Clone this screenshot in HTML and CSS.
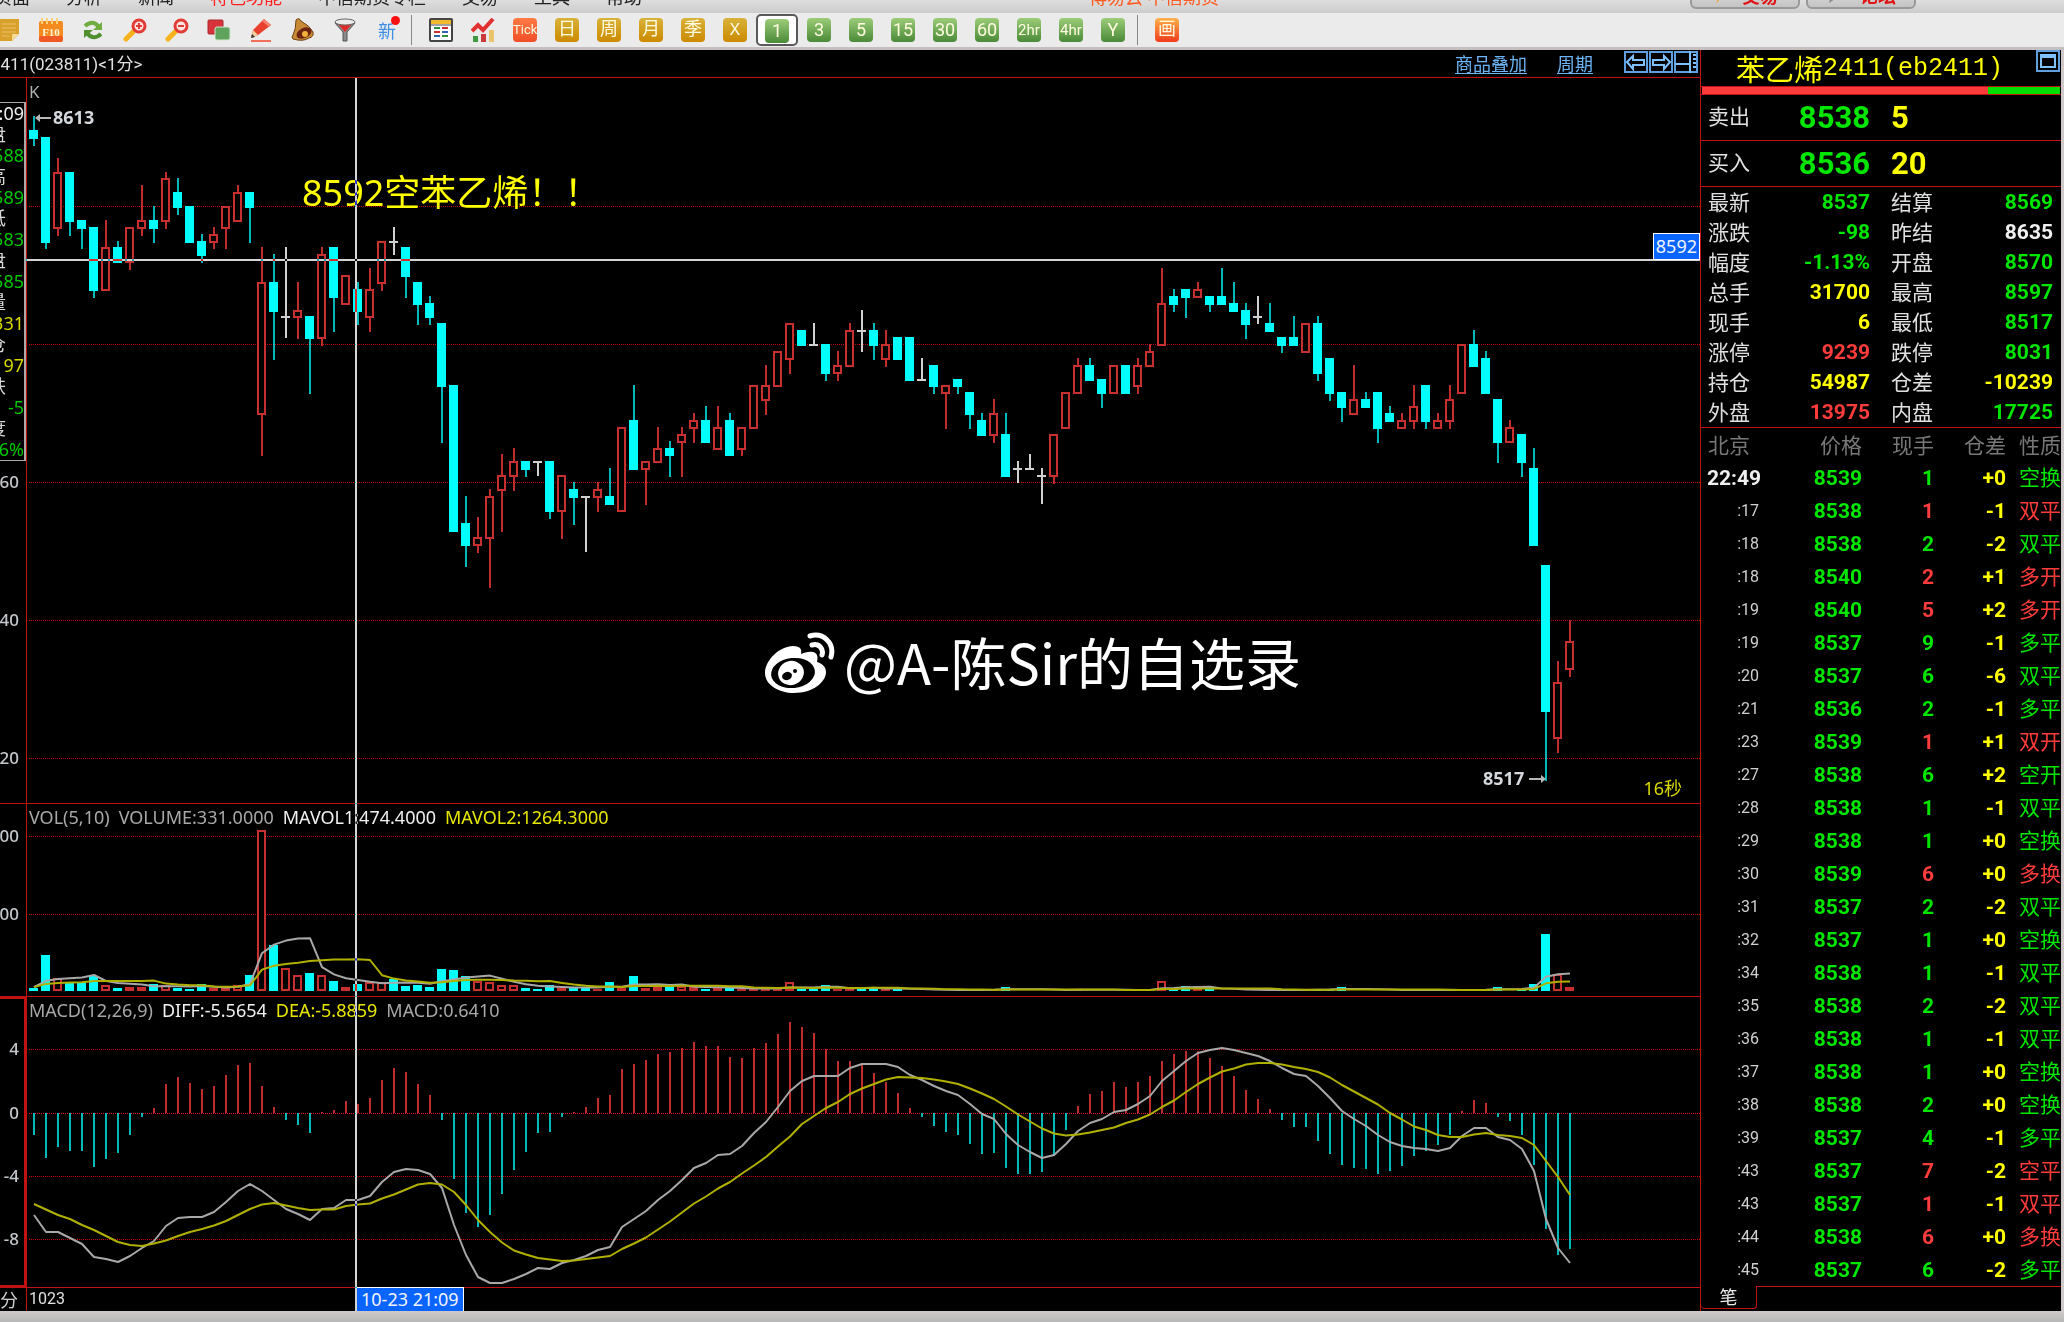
FILE: index.html
```html
<!DOCTYPE html>
<html lang="zh-CN">
<head>
<meta charset="utf-8">
<title>苯乙烯2411 1分</title>
<link rel="stylesheet" href="styles.css">
</head>
<body>
<nav class="menubar">
  <a class="menu" href="#">页面</a>
  <a class="menu" href="#">分析</a>
  <a class="menu" href="#">新闻</a>
  <a class="menu menu-hot" href="#">特色功能</a>
  <a class="menu" href="#">中信期货专栏</a>
  <a class="menu" href="#">交易</a>
  <a class="menu" href="#">工具</a>
  <a class="menu" href="#">帮助</a>
  <span class="brand">博易云 中信期货</span>
  <span class="menu-actions">
    <button class="pill"><svg width="16" height="18" viewBox="0 0 16 18"><path d="M10 0L3 10h4L4 18l9-11H9l4-7z" fill="#f5a030"/></svg>交易</button>
    <button class="pill"><svg width="20" height="18" viewBox="0 0 20 18"><path d="M2 4h16v9H9l-6 4 1-4H2z" fill="#888"/></svg>论坛</button>
  </span>
</nav>

<div class="toolbar">
  <button class="tool" aria-label="笔记"><svg width="24" height="24" viewBox="0 0 24 24"><path d="M2 1h20v15l-7 7H4q-2 0-2-2z" fill="#d9a02c"/><path d="M22 16l-7 7v-6q0-1 1-1z" fill="#f6dc96"/><path d="M5 6h14M5 10h14M5 14h14M5 18h8" stroke="#eac066" stroke-width="1"/></svg></button>
  <button class="tool" aria-label="F10"><svg width="24" height="24" viewBox="0 0 24 24"><rect y="3" width="24" height="20" rx="2" fill="#f58a1f"/><rect x="0" y="18" width="24" height="6" rx="2" fill="#ef5a24"/><path d="M3 0v6M8 0v6M13 0v6M18 0v6" stroke="#ffd27a" stroke-width="2"/><text class="f10" x="12" y="18" text-anchor="middle">F10</text></svg></button>
  <button class="tool" aria-label="刷新"><svg width="24" height="24" viewBox="0 0 24 24" fill="none" stroke-width="4"><path d="M4 8q8-7 14 1" stroke="#6fae3e"/><path d="M21 4v8h-9z" fill="#6fae3e"/><path d="M20 16q-8 7-14-1" stroke="#4f8f2f"/><path d="M3 20v-8h9z" fill="#4f8f2f"/></svg></button>
  <button class="tool" aria-label="放大"><svg width="24" height="24" viewBox="0 0 24 24" fill="none"><path d="M3 21l7-7" stroke="#f5b21c" stroke-width="5" stroke-linecap="round"/><circle cx="16" cy="8" r="6" fill="#ffe3e3" stroke="#e23a34" stroke-width="3"/><path d="M16 5v6M13 8h6" stroke="#e23a34" stroke-width="2"/></svg></button>
  <button class="tool" aria-label="缩小"><svg width="24" height="24" viewBox="0 0 24 24" fill="none"><path d="M3 21l7-7" stroke="#f5b21c" stroke-width="5" stroke-linecap="round"/><circle cx="16" cy="8" r="6" fill="#ffe3e3" stroke="#e23a34" stroke-width="3"/><path d="M13 8h6" stroke="#e23a34" stroke-width="2"/></svg></button>
  <button class="tool" aria-label="叠加"><svg width="24" height="24" viewBox="0 0 24 24"><rect x="1" y="2" width="15" height="14" rx="1" fill="#d8323a" stroke="#a52a30"/><rect x="8" y="9" width="15" height="13" rx="2" fill="#5fa35c" stroke="#d5e8d0"/></svg></button>
  <button class="tool" aria-label="画线"><svg width="24" height="24" viewBox="0 0 24 24"><path d="M2 23h20" stroke="#f0705a" stroke-width="2"/><path d="M2 20l2-8L15 1l7 6L9 17z" fill="#e8402c"/><path d="M2 20l2-8 5 5z" fill="#efcf9e"/><path d="M15 1l7 6-2 2-7-6z" fill="#f5826e"/><path d="M2 20l1-4 3 3z" fill="#333"/></svg></button>
  <button class="tool" aria-label="预警"><svg width="24" height="24" viewBox="0 0 24 24"><path d="M5 2q3-3 5 1 9 5 12 11 1 5-4 6-6 4-16 1-2-2 0-4 3-6 3-15z" fill="#c98a35" stroke="#6e4313"/><ellipse cx="13" cy="15" rx="8" ry="5" transform="rotate(-25 13 15)" fill="#6a2410"/><circle cx="14" cy="16" r="3" fill="#f3b23a"/></svg></button>
  <button class="tool" aria-label="筛选"><svg width="24" height="24" viewBox="0 0 24 24"><path d="M2 5l8 9v9h4v-9l8-9z" fill="#8b8b8b" stroke="#555"/><path d="M5 6l7 8 7-8z" fill="#e02a2a"/><ellipse cx="12" cy="4" rx="10" ry="3" fill="#ececec" stroke="#666"/></svg></button>
  <button class="tool tool-new">新<i></i></button>
  <span class="sep"></span>
  <button class="tool" aria-label="报价"><svg width="24" height="24" viewBox="0 0 24 24"><rect x="1" y="1" width="22" height="22" rx="1" fill="#fff" stroke="#444" stroke-width="2"/><path d="M2 4h20" stroke="#f2b82e" stroke-width="4"/><path d="M5 10h6" stroke="#2f8f3f" stroke-width="2"/><path d="M13 10h6M5 14h6" stroke="#d23030" stroke-width="2"/><path d="M13 14h6M5 18h6" stroke="#2f62b0" stroke-width="2"/><path d="M13 18h6" stroke="#2f8f3f" stroke-width="2"/><path d="M2 7h20" stroke="#444"/></svg></button>
  <button class="tool" aria-label="走势"><svg width="24" height="24" viewBox="0 0 24 24"><path d="M1 13l6-6 5 5L22 1" stroke="#e03030" stroke-width="4" fill="none"/><rect x="2" y="18" width="5" height="6" fill="#3f9a3f"/><rect x="10" y="16" width="5" height="8" fill="#c93a3a"/><rect x="18" y="12" width="5" height="12" fill="#e9c46a"/></svg></button>
  <button class="tool"><span class="tile tile-tick">Tick</span></button>
  <button class="tool"><span class="tile tile-gold">日</span></button>
  <button class="tool"><span class="tile tile-gold">周</span></button>
  <button class="tool"><span class="tile tile-gold">月</span></button>
  <button class="tool"><span class="tile tile-gold">季</span></button>
  <button class="tool"><span class="tile tile-gold">X</span></button>
  <button class="tool tool-on"><span class="tile tile-green">1</span></button>
  <button class="tool"><span class="tile tile-green">3</span></button>
  <button class="tool"><span class="tile tile-green">5</span></button>
  <button class="tool"><span class="tile tile-green">15</span></button>
  <button class="tool"><span class="tile tile-green">30</span></button>
  <button class="tool"><span class="tile tile-green">60</span></button>
  <button class="tool"><span class="tile tile-green tile-small">2hr</span></button>
  <button class="tool"><span class="tile tile-green tile-small">4hr</span></button>
  <button class="tool"><span class="tile tile-green">Y</span></button>
  <span class="sep"></span>
  <button class="tool"><span class="tile tile-draw">画</span></button>
</div>

<main class="workspace">
  <section class="charts">
    <header class="chart-head">
      <span class="chart-name">2411(023811)&lt;1分&gt;</span>
      <span class="chart-links">
        <a href="#">商品叠加</a>
        <a href="#">周期</a>
      </span>
      <span class="chart-btns">
        <button class="box-btn" aria-label="上一个"><svg width="24" height="22" viewBox="0 0 24 22"><path d="M3 11l6-6v4h11v5H9v4z"/></svg></button>
        <button class="box-btn" aria-label="下一个"><svg width="24" height="22" viewBox="0 0 24 22"><path d="M21 11l-6-6v4H4v5h11v4z"/></svg></button>
        <button class="box-btn" aria-label="分栏"><svg width="24" height="22" viewBox="0 0 24 22"><path d="M1 13h15M16 0v22M19 4h3M19 8h3M19 12h3M19 16h3"/></svg></button>
      </span>
    </header>

    <div class="panels">
      <div class="panel panel-price">
        <svg class="axis" id="price-axis"></svg>
        <div class="plot">
          <svg class="canvas" id="price-plot"></svg>
          <span class="kmark">K</span>
          <span class="countdown">16秒</span>
        </div>
      </div>
      <div class="panel panel-vol">
        <svg class="axis" id="vol-axis"></svg>
        <div class="plot">
          <svg class="canvas" id="vol-plot"></svg>
          <p class="legend"><span class="g">VOL(5,10)</span><span class="g">VOLUME:331.0000</span><span class="w">MAVOL1:474.4000</span><span class="y">MAVOL2:1264.3000</span></p>
        </div>
      </div>
      <div class="panel panel-macd">
        <svg class="axis axis-active" id="macd-axis"></svg>
        <div class="plot">
          <svg class="canvas" id="macd-plot"></svg>
          <p class="legend"><span class="g">MACD(12,26,9)</span><span class="w">DIFF:-5.5654</span><span class="y">DEA:-5.8859</span><span class="g">MACD:0.6410</span></p>
        </div>
      </div>
      <div class="panel panel-time">
        <span class="time-unit">分</span>
        <span class="time-start">1023</span>
      </div>

      <dl class="probe">
        <dd class="w">21:09</dd>
        <dt>开盘</dt><dd class="up">8588</dd>
        <dt>最高</dt><dd class="up">8589</dd>
        <dt>最低</dt><dd class="up">8583</dd>
        <dt>收盘</dt><dd class="up">8585</dd>
        <dt>成交量</dt><dd class="y">331</dd>
        <dt>持仓</dt><dd class="y">54197</dd>
        <dt>涨跌</dt><dd class="up">-5</dd>
        <dt>幅度</dt><dd class="up">-0.06%</dd>
      </dl>

      <p class="note">8592空苯乙烯！！</p>
      <div class="watermark">
        <svg width="72" height="64" viewBox="0 0 72 64"><path d="M29 14C16 14 1 28 1 41c0 12 14 20 29 20 19 0 32-11 32-21 0-6-5-9-9-10 1-4 1-9-4-10-4-1-9 1-12 2 1-4 0-8-8-8z" fill="#fff"/><ellipse cx="29" cy="41" rx="22" ry="15" fill="#000" transform="rotate(-6 29 41)"/><ellipse cx="27" cy="41" rx="13" ry="12" fill="#fff" transform="rotate(-20 27 41)"/><ellipse cx="23" cy="44" rx="5" ry="4" fill="#000" transform="rotate(-20 23 44)"/><circle cx="31" cy="39" r="2" fill="#000"/><path d="M46 4c13-4 25 7 21 21M48 13c7-2 12 4 10 10" stroke="#fff" stroke-width="5" stroke-linecap="round" fill="none"/></svg>
        <span>@A-陈Sir的自选录</span>
      </div>

      <i class="cross cross-v"></i>
      <i class="cross cross-h"></i>
      <span class="tag tag-price">8592</span>
      <span class="tag tag-time">10-23 21:09</span>
    </div>
  </section>

  <aside class="side">
    <header class="side-head">
      <h1><span>苯乙烯</span><span class="code">2411(eb2411)</span></h1>
      <button class="box-btn side-max" aria-label="还原"><svg width="24" height="22" viewBox="0 0 24 22"><path d="M5 5h14v12H5zM5 7h14"/></svg></button>
    </header>
    <div class="ratio"><i class="ratio-buy"></i><i class="ratio-sell"></i></div>
    <div class="book"><span>卖出</span><b class="up">8538</b><b class="y">5</b></div>
    <div class="book"><span>买入</span><b class="up">8536</b><b class="y">20</b></div>
    <dl class="quote">
      <div><dt>最新</dt><dd class="up">8537</dd></div><div><dt>结算</dt><dd class="up">8569</dd></div>
      <div><dt>涨跌</dt><dd class="up">-98</dd></div><div><dt>昨结</dt><dd class="w">8635</dd></div>
      <div><dt>幅度</dt><dd class="up">-1.13%</dd></div><div><dt>开盘</dt><dd class="up">8570</dd></div>
      <div><dt>总手</dt><dd class="y">31700</dd></div><div><dt>最高</dt><dd class="up">8597</dd></div>
      <div><dt>现手</dt><dd class="y">6</dd></div><div><dt>最低</dt><dd class="up">8517</dd></div>
      <div><dt>涨停</dt><dd class="dn">9239</dd></div><div><dt>跌停</dt><dd class="up">8031</dd></div>
      <div><dt>持仓</dt><dd class="y">54987</dd></div><div><dt>仓差</dt><dd class="y">-10239</dd></div>
      <div><dt>外盘</dt><dd class="dn">13975</dd></div><div><dt>内盘</dt><dd class="up">17725</dd></div>
    </dl>
    <table class="ticks">
      <colgroup><col class="c-time"><col class="c-price"><col class="c-vol"><col class="c-vol"><col class="c-kind"></colgroup>
      <thead><tr><th>北京</th><th>价格</th><th>现手</th><th>仓差</th><th>性质</th></tr></thead>
      <tbody>
        <tr class="up first"><td>22:49</td><td>8539</td><td>1</td><td>+0</td><td>空换</td></tr>
        <tr class="dn"><td>:17</td><td>8538</td><td>1</td><td>-1</td><td>双平</td></tr>
        <tr class="up"><td>:18</td><td>8538</td><td>2</td><td>-2</td><td>双平</td></tr>
        <tr class="dn"><td>:18</td><td>8540</td><td>2</td><td>+1</td><td>多开</td></tr>
        <tr class="dn"><td>:19</td><td>8540</td><td>5</td><td>+2</td><td>多开</td></tr>
        <tr class="up"><td>:19</td><td>8537</td><td>9</td><td>-1</td><td>多平</td></tr>
        <tr class="up"><td>:20</td><td>8537</td><td>6</td><td>-6</td><td>双平</td></tr>
        <tr class="up"><td>:21</td><td>8536</td><td>2</td><td>-1</td><td>多平</td></tr>
        <tr class="dn"><td>:23</td><td>8539</td><td>1</td><td>+1</td><td>双开</td></tr>
        <tr class="up"><td>:27</td><td>8538</td><td>6</td><td>+2</td><td>空开</td></tr>
        <tr class="up"><td>:28</td><td>8538</td><td>1</td><td>-1</td><td>双平</td></tr>
        <tr class="up"><td>:29</td><td>8538</td><td>1</td><td>+0</td><td>空换</td></tr>
        <tr class="dn"><td>:30</td><td>8539</td><td>6</td><td>+0</td><td>多换</td></tr>
        <tr class="up"><td>:31</td><td>8537</td><td>2</td><td>-2</td><td>双平</td></tr>
        <tr class="up"><td>:32</td><td>8537</td><td>1</td><td>+0</td><td>空换</td></tr>
        <tr class="up"><td>:34</td><td>8538</td><td>1</td><td>-1</td><td>双平</td></tr>
        <tr class="up"><td>:35</td><td>8538</td><td>2</td><td>-2</td><td>双平</td></tr>
        <tr class="up"><td>:36</td><td>8538</td><td>1</td><td>-1</td><td>双平</td></tr>
        <tr class="up"><td>:37</td><td>8538</td><td>1</td><td>+0</td><td>空换</td></tr>
        <tr class="up"><td>:38</td><td>8538</td><td>2</td><td>+0</td><td>空换</td></tr>
        <tr class="up"><td>:39</td><td>8537</td><td>4</td><td>-1</td><td>多平</td></tr>
        <tr class="dn"><td>:43</td><td>8537</td><td>7</td><td>-2</td><td>空平</td></tr>
        <tr class="dn"><td>:43</td><td>8537</td><td>1</td><td>-1</td><td>双平</td></tr>
        <tr class="dn"><td>:44</td><td>8538</td><td>6</td><td>+0</td><td>多换</td></tr>
        <tr class="up"><td>:45</td><td>8537</td><td>6</td><td>-2</td><td>多平</td></tr>
      </tbody>
    </table>
    <div class="side-tabs"><button class="side-tab">笔</button></div>
  </aside>
</main>
<footer class="status"></footer>
<script src="chart.js"></script>
</body>
</html>
```
FILE: styles.css
```css
* { box-sizing: border-box; margin: 0; padding: 0; }
html, body { height: 100%; }
body {
  display: flex;
  flex-direction: column;
  overflow: hidden;
  background: #000;
  color: #e0e0e0;
  font-family: "Noto Sans", "Noto Sans CJK SC", sans-serif;
  font-size: 18px;
}
button { font: inherit; color: inherit; background: none; border: 0; }
a { color: inherit; text-decoration: none; }
i { font-style: normal; }

.up { color: #00e600; }
.dn { color: #ff3c3c; }
.y { color: #ffff00; }
.w { color: #f0f0f0; }
.g { color: #a8a8a8; }

/* menu strip, scrolled so that only its foot shows */
.menubar {
  display: flex;
  align-items: flex-end;
  gap: 36px;
  flex: none;
  height: 16px;
  margin: 0 0 0 -6px;
  padding: 0 148px 8px 0;
  overflow: hidden;
  background: linear-gradient(#dedede, #c8c8c8);
  color: #222;
  font-family: "Noto Sans CJK SC", sans-serif;
  line-height: 24px;
  white-space: nowrap;
}
.menu-hot { color: #ff2020; }
.brand { margin-left: 411px; color: #ff5a1e; }
.menu-actions { display: flex; gap: 6px; margin-left: auto; margin-bottom: -1px; }
.pill {
  display: flex;
  align-items: center;
  justify-content: center;
  gap: 14px;
  width: 110px;
  height: 28px;
  border: 2px solid #999;
  border-radius: 6px;
  background: linear-gradient(#e8e8e8, #c4c4c4);
  color: #e01414;
  font-weight: 700;
}

.toolbar {
  display: flex;
  align-items: center;
  flex: none;
  height: 37px;
  margin: -3px 0 0 -12px;
  background: #ebebeb;
  border-bottom: 3px solid #c6bfbf;
}
.tool {
  display: grid;
  place-items: center;
  flex: none;
  width: 42px;
  height: 32px;
}
.tool-on { border: 2px solid #5a5a5a; border-radius: 5px; background: #fff; padding-top: 2px; }
.tool-new { position: relative; color: #3d8fe6; }
.tool-new i { position: absolute; top: 2px; right: 8px; width: 9px; height: 9px; border-radius: 50%; background: #ff1010; }
.f10 { font: 700 11px "Liberation Serif", serif; fill: #fff3d8; }
.sep { flex: none; width: 12px; height: 30px; background: linear-gradient(#888, #888) 3px 0 / 1px 100% no-repeat; }
.tile {
  display: grid;
  place-items: center;
  width: 24px;
  height: 24px;
  border-radius: 4px;
  color: #fffbe0;
  font-family: "Liberation Mono", "Noto Sans CJK SC", monospace;
  font-size: 18px;
  line-height: 24px;
}
.tile-gold { background: linear-gradient(#d9b23a, #cc8a00); }
.tile-green { background: linear-gradient(#9ccc78, #4a8a38); font-family: Roboto, sans-serif; }
.tile-small { font-size: 15px; }
.tile-tick { background: linear-gradient(#ff7a45, #f04e28); font: 13px/24px Roboto, sans-serif; }
.tile-draw { background: linear-gradient(#ffb04a, #f03c1c); }

.workspace {
  display: flex;
  flex: 1;
  min-height: 0;
  border-right: 3px solid #cfc8c8;
}
.charts { display: flex; flex-direction: column; flex: 1; min-width: 0; }
.chart-head {
  display: flex;
  align-items: center;
  flex: none;
  height: 28px;
  padding-bottom: 2px;
  border-bottom: 1px solid #c01212;
}
.chart-name { margin-left: -9px; font-family: Roboto, "Noto Sans CJK SC", sans-serif; font-size: 17px; }
.chart-links { display: flex; gap: 30px; margin-left: auto; color: #6cb4f4; }
.chart-links a { text-decoration: underline; text-underline-offset: 2px; }
.chart-btns { display: flex; gap: 1px; margin: 0 2px 2px 31px; }
.box-btn { display: block; width: 24px; height: 22px; border: 2px solid #5f9fe0; }
.box-btn svg { display: block; margin: -2px; fill: none; stroke: #7fc0ff; stroke-width: 2; }

.panels { position: relative; display: flex; flex-direction: column; flex: 1; min-height: 0; overflow: hidden; }
.panel { display: grid; grid-template-columns: 26px 1fr; flex: none; border-bottom: 1px solid #c01212; }
.panel-price { flex: 1 1 0; min-height: 0; }
.panel-vol { height: 193px; }
.panel-macd { height: 291px; }
.panel-time { height: 23px; border-bottom: 0; align-items: center; }
.plot { position: relative; border-left: 1px solid #c01212; overflow: hidden; }
.canvas, .axis { display: block; width: 100%; height: 100%; overflow: hidden; }
.axis-active { border: solid #c01212; border-width: 2px 2px 2px 0; }
.axis text { fill: #c4c8cc; font-weight: 500; font-size: 17px; text-anchor: end; }
.kmark { position: absolute; left: 2px; top: 2px; color: #b0b0b0; font-size: 17px; line-height: 24px; }
.countdown { position: absolute; right: 18px; bottom: 3px; color: #d8d800; font-size: 18px; line-height: 24px; }
.legend { position: absolute; left: 2px; top: 1px; display: flex; gap: 9px; font-size: 18px; line-height: 24px; white-space: nowrap; }
.legend .y { color: #e6e600; }
.time-unit { color: #d0d0d0; line-height: 22px; }
.time-start { height: 23px; padding-left: 2px; border-left: 1px solid #c01212; font: 16px/22px Roboto, sans-serif; }

.grid-line { stroke: #c40000; stroke-dasharray: 1 1; }
.zero-line { stroke: #e81818; stroke-dasharray: 1 1; }
.fall { fill: #00ffff; }
.fall-wick { fill: #00b8b8; }
.rise { fill: #000; stroke: #c83030; stroke-width: 2; }
.rise-wick { fill: #c02c2c; }
.flat { fill: #d0d0d0; }
.ma-white, .ma-yellow { fill: none; stroke-width: 2; stroke-linejoin: round; }
.ma-white { stroke: #a8a8a8; }
.ma-yellow { stroke: #b0b000; }
.peak { fill: #d4d8dc; font-size: 18px; font-weight: 700; }
.arrow { fill: #b8b8b8; }

/* readout of the bar under the crosshair */
.probe {
  position: absolute;
  left: 0;
  top: 24px;
  width: 26px;
  border: solid #a8a8a8;
  border-width: 1px 2px 1px 0;
  background: #000;
  overflow: hidden;
}
.probe dt, .probe dd {
  display: flex;
  justify-content: flex-end;
  height: 21px;
  line-height: 21px;
  font-size: 18px;
  white-space: nowrap;
}
.probe dt { margin-right: 18px; color: #d8d8d8; }
.probe .up { color: #00c800; }
.probe .y { color: #d8d800; }

.note { position: absolute; left: 302px; top: 90px; color: #ffff00; font-size: 36px; line-height: 50px; white-space: nowrap; }
.watermark {
  position: absolute;
  left: 764px;
  top: 543px;
  display: flex;
  align-items: center;
  gap: 8px;
  color: #fff;
  font-family: "Noto Sans CJK SC", sans-serif;
  font-size: 56px;
  line-height: 80px;
  white-space: nowrap;
}
.watermark span { padding-bottom: 6px; }
.cross { position: absolute; background: #d4d4d4; mix-blend-mode: difference; }
.cross-v { left: 355px; top: 0; bottom: 0; width: 2px; }
.cross-h { left: 26px; right: 0; top: 181px; height: 2px; }
.tag { position: absolute; background: #0a64ff; color: #f0f4ff; font-size: 18px; white-space: nowrap; }
.tag-price { right: 0; top: 155px; padding: 0 2px; border: 1px solid #fff; line-height: 25px; }
.tag-time { left: 357px; bottom: 0; padding: 0 4px; border: solid #fff; border-width: 1px 1px 0 0; line-height: 23px; }

.side { display: flex; flex-direction: column; flex: none; width: 361px; border-left: 1px solid #c01212; }
.side-head { position: relative; flex: none; height: 36px; }
.side-head h1 {
  display: flex;
  align-items: center;
  justify-content: center;
  height: 36px;
  padding-right: 23px;
  color: #ffff00;
  font-size: 29px;
  font-weight: 400;
}
.side-head .code { font-family: "Liberation Mono", monospace; font-size: 25px; }
.side-max { position: absolute; right: 1px; top: 0; }
.ratio { display: flex; flex: none; height: 9px; padding: 0 1px; border: solid #c01212; border-width: 1px 0; }
.ratio-buy { flex: 80; background: #ff3a3a; }
.ratio-sell { flex: 20; background: #00e000; }
.book {
  display: grid;
  grid-template-columns: 42px 120px 1fr;
  align-items: center;
  flex: none;
  height: 46px;
  padding-left: 7px;
  border-bottom: 1px solid #c01212;
  font-size: 21px;
  line-height: 45px;
}
.book span { padding-bottom: 3px; line-height: 42px; }
.book b { font: 700 31px/45px Roboto, sans-serif; text-align: right; }
.book b + b { padding-left: 21px; text-align: left; }
.quote {
  display: grid;
  grid-template-columns: 1fr 1fr;
  column-gap: 21px;
  flex: none;
  padding: 0 8px 0 7px;
  border-bottom: 1px solid #c01212;
}
.quote div { display: flex; justify-content: space-between; height: 30px; line-height: 30px; }
.quote dt { font-size: 21px; }
.quote dd { font-family: Roboto, sans-serif; font-size: 21px; font-weight: 700; }

.ticks { flex: none; width: 100%; table-layout: fixed; border-collapse: collapse; text-align: right; }
.c-time { width: 60px; }
.c-price { width: 101px; }
.c-vol { width: 72px; }
.ticks th, .ticks td { height: 33px; line-height: 32px; font-size: 21px; white-space: nowrap; }
.ticks th { color: #787878; font-weight: 400; }
.ticks th:first-child { padding-left: 7px; text-align: left; }
.ticks td { font-family: Roboto, "Noto Sans CJK SC", sans-serif; font-weight: 700; }
.ticks td:first-child { padding-right: 2px; color: #d0d0d0; font-size: 16px; font-weight: 400; }
.ticks .first td:first-child { padding-right: 0; color: #f0f0f0; font-size: 21px; font-weight: 700; }
.ticks td:nth-child(2) { color: #00e600; }
.ticks td:nth-child(4) { color: #ffff00; }
.ticks td:last-child { font-weight: 400; }
.side-tabs { flex: 1; border-top: 1px solid #c01212; }
.side-tab {
  display: block;
  width: 56px;
  height: 23px;
  margin-top: -1px;
  border: solid #c01212;
  border-width: 0 1px 1px 0;
  border-radius: 0 0 4px 4px;
  background: #000;
  color: #e8e8e8;
  font-size: 18px;
  line-height: 21px;
}
.status { flex: none; height: 11px; background: linear-gradient(#cfc9c9, #b8b8b8); }
```
FILE: chart.js
```js
// One-minute bars: open, high, low, close, as points above 8500.
const bars = [
[111,113,109,110],[110,110,94,95],[97,107,96,105],[105,105,96,98],[98,98,94,97],[97,97,87,88],[88,98,88,94],[94,95,92,92],[92,97,91,97],[97,103,96,98],
[98,100,95,97],[98,105,97,104],[102,104,99,100],[100,100,95,95],[95,96,92,93],[95,97,94,96],[97,100,94,100],[98,103,98,102],[102,102,95,100],[70,94,64,89],
[89,93,78,85],[84,94,81,84],[84,89,81,85],[84,84,73,81],[81,94,80,93],[94,94,82,87],[86,90,86,90],[88,89,83,85],[84,91,82,88],[89,95,88,95],
[95,97,93,95],[94,94,87,90],[89,89,83,86],[86,87,83,84],[83,83,66,74],[74,74,53,53],[54,58,48,51],[51,55,50,52],[52,59,45,58],[59,64,53,61],
[61,65,59,63],[63,63,61,62],[63,63,61,63],[63,63,55,56],[56,61,52,61],[59,60,54,58],[58,58,50,58],[58,60,56,59],[58,62,57,57],[56,68,56,68],
[69,74,62,62],[62,63,57,63],[63,68,63,65],[65,66,61,64],[66,68,61,67],[68,70,66,69],[69,71,66,66],[65,71,65,68],[69,70,64,64],[65,68,64,68],
[68,74,68,74],[72,77,70,74],[74,79,74,79],[78,83,76,83],[82,82,80,80],[80,83,80,80],[80,80,75,76],[76,79,75,77],[77,83,77,82],[82,85,79,82],
[82,83,78,80],[78,82,77,80],[81,81,78,78],[81,81,75,75],[75,78,75,75],[77,77,73,74],[73,74,68,74],[75,75,73,74],[73,73,68,70],[69,70,67,67],
[67,72,66,70],[67,70,61,61],[62,63,60,62],[62,64,62,62],[61,62,57,61],[61,67,60,67],[68,73,68,73],[73,78,73,77],[77,78,75,75],[75,75,71,73],
[73,77,73,77],[77,77,73,73],[74,78,73,77],[77,80,77,79],[80,91,80,86],[87,88,85,86],[88,88,84,87],[87,89,87,88],[87,87,85,86],[87,91,86,86],
[86,89,85,85],[85,86,81,83],[84,87,83,84],[83,86,82,82],[81,81,79,80],[81,84,80,80],[79,83,79,83],[83,84,75,76],[78,78,72,73],[73,73,69,71],
[70,77,70,72],[72,73,71,71],[73,73,66,68],[70,71,69,69],[68,70,68,69],[69,74,68,71],[74,74,68,69],[68,70,68,69],[69,74,68,72],[73,80,73,80],
[80,82,77,77],[78,79,73,73],[72,72,63,66],[66,69,66,68],[67,67,61,63],[62,65,51,51],[48,48,17,27],[23,34,21,31],[33,40,32,37]];

const vols = [3,36,13,8,8,15,6,3,4,4,7,6,3,2,7,3,3,6,16,161,46,23,16,18,16,10,4,7,9,9,12,5,6,4,22,21,15,10,9,6,6,3,2,6,3,4,3,2,9,3,
15,3,4,5,5,4,2,3,4,2,2,2,2,9,2,2,6,2,2,2,4,2,2,1,1,1,1,1,1,1,2,4,1,1,1,1,1,2,1,1,1,1,1,1,10,2,5,2,2,1,
1,1,1,1,1,1,1,2,2,4,1,1,1,1,1,1,1,1,1,1,1,2,4,1,2,7,57,17,4];

const macd = [-22,-45,-34,-38,-38,-54,-46,-40,-22,-4,5,29,36,30,24,27,38,48,50,27,6,-7,-12,-20,1,3,12,9,15,33,45,41,29,18,-7,-66,-100,-114,-102,-81,-57,-39,-20,-19,-4,1,6,15,18,44,
49,53,59,61,65,71,67,67,56,55,65,70,79,91,86,80,64,52,52,49,40,31,20,5,-4,-13,-19,-22,-31,-41,-40,-55,-61,-61,-59,-43,-17,7,19,22,31,26,31,37,52,59,62,62,55,47,
37,23,14,4,-7,-14,-14,-28,-41,-52,-55,-56,-61,-58,-53,-43,-38,-32,-22,2,13,10,-4,-8,-22,-52,-116,-142,-136];

const diff = [-102,-119,-119,-125,-131,-144,-146,-149,-143,-135,-128,-113,-105,-104,-104,-99,-89,-78,-71,-78,-87,-96,-101,-107,-96,-95,-87,-87,-83,-69,-59,-56,-57,-61,-75,-112,-142,-164,-170,-170,-166,-161,-155,-156,-150,-147,-143,-137,-134,-114,
-106,-98,-87,-78,-67,-55,-50,-42,-41,-33,-20,-9,6,22,32,37,37,37,45,49,49,49,46,38,33,27,22,18,9,-1,-6,-21,-32,-39,-45,-42,-31,-18,-10,-6,1,3,9,17,32,42,52,60,63,65,
63,60,57,52,45,39,37,27,15,2,-6,-13,-22,-29,-33,-35,-36,-38,-35,-23,-15,-15,-24,-27,-36,-58,-106,-135,-150];

const STEP = 12, BODY = 9, LEFT = 2, WICK = 6, THIN = 2;
const NS = 'http://www.w3.org/2000/svg';
const $ = id => document.getElementById(id);

function add(svg, tag, cls, attrs, text) {
  const el = document.createElementNS(NS, tag);
  if (cls) el.setAttribute('class', cls);
  for (const k in attrs) el.setAttribute(k, attrs[k]);
  if (text) el.textContent = text;
  svg.appendChild(el);
}
function rect(svg, cls, x, y, width, height) { add(svg, 'rect', cls, { x, y, width, height }); }
function hollow(svg, x, y, w, h) {
  if (h < 3) rect(svg, 'rise-wick', x, y, w, h);
  else rect(svg, 'rise', x + 1, y + 1, w - 2, h - 2);
}
function gridLine(svg, y, cls) { add(svg, 'line', cls || 'grid-line', { x1: 2, x2: '100%', y1: y + .5, y2: y + .5 }); }
function curve(svg, cls, ys) {
  add(svg, 'polyline', cls, { points: ys.map((y, i) => (WICK + 1 + i * STEP) + ',' + y).join(' ') });
}
function label(id, y, text) { add($(id), 'text', '', { x: 19, y: y + 6 }, text); }

// Price
const P = $('price-plot');
const py = p => Math.round(128 + (100 - p) * 6.9);
[100, 80, 60, 40, 20].forEach(p => gridLine(P, py(p)));
[['60', 60], ['40', 40], ['20', 20]].forEach(([t, p]) => label('price-axis', py(p), t));
bars.forEach(([o, h, l, c], i) => {
  const x = LEFT + i * STEP, wx = WICK + i * STEP;
  const top = py(Math.max(o, c)), bot = py(Math.min(o, c)) + 2;
  if (o === c) {
    rect(P, 'flat', wx, py(h), THIN, py(l) - py(h) + 1);
    rect(P, 'flat', x, top, BODY, THIN);
  } else {
    rect(P, c > o ? 'rise-wick' : 'fall-wick', wx, py(h), THIN, py(l) - py(h) + 2);
    if (c > o) hollow(P, x, top, BODY, bot - top);
    else rect(P, 'fall', x, top, BODY, bot - top);
  }
});
add(P, 'text', 'peak', { x: 26, y: 46 }, '8613');
add(P, 'path', 'arrow', { d: 'M8 40l5-4v3h11v2H13v3z' });
add(P, 'text', 'peak', { x: 1456, y: 707 }, '8517');
add(P, 'path', 'arrow', { d: 'M1519 701l-5-4v3h-12v2h12v3z' });

// Volume
const V = $('vol-plot'), vBase = 187;
[32, 110].forEach(y => { gridLine(V, y); label('vol-axis', y, '000'); });
vols.forEach((v, i) => {
  if (v < 2) return;
  const x = LEFT + i * STEP, up = bars[i][3] > bars[i][0] || i === 21;
  if (up) hollow(V, x, vBase - v, BODY, v);
  else rect(V, 'fall', x, vBase - v, BODY, v);
});
const mean = n => vols.map((_, i) => {
  let s = 0;
  for (let k = i - n + 1; k <= i; k++) s += k < 0 ? 4 : vols[k];
  return vBase - s / n;
});
curve(V, 'ma-white', mean(5));
curve(V, 'ma-yellow', mean(10));

// MACD
const M = $('macd-plot'), zero = 116;
gridLine(M, 52); gridLine(M, zero, 'zero-line'); gridLine(M, 179); gridLine(M, 242);
[['4', 52], ['0', zero], ['-4', 179], ['-8', 242]].forEach(([t, y]) => label('macd-axis', y - 2, t));
macd.forEach((m, i) => {
  const x = WICK + i * STEP;
  if (m > 0) rect(M, 'rise-wick', x, zero - m, THIN, m);
  else rect(M, 'fall-wick', x, zero, THIN, -m);
});
curve(M, 'ma-white', diff.map(d => zero - d));
curve(M, 'ma-yellow', diff.map((d, i) => zero - d + macd[i] / 2));
```
